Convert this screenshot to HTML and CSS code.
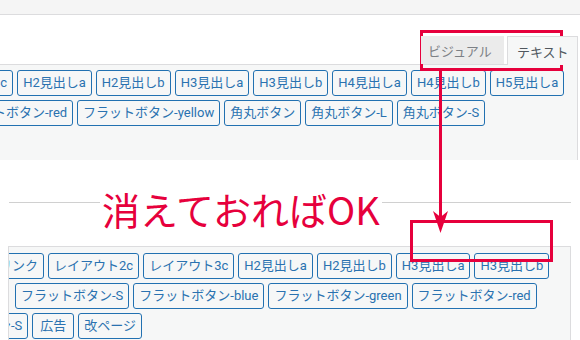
FILE: index.html
```html
<!DOCTYPE html>
<html lang="ja">
<head>
    <meta charset="UTF-8">
    <title>テキストタブ</title>
    <link rel="stylesheet" href="styles.css">
</head>
<body>
    <div class="page">
        <div class="shot-top">
            <div class="strip"></div>
            <div class="head">
                <div class="tabs">
                    <span class="tab tab-visual">ビジュアル</span>
                    <span class="tab tab-text">テキスト</span>
                </div>
            </div>
            <div class="toolbar toolbar-top">
                <div class="qt-row shift-top-1">
                    <button class="qt">レイアウト3c</button>
                    <button class="qt">H2見出しa</button>
                    <button class="qt">H2見出しb</button>
                    <button class="qt">H3見出しa</button>
                    <button class="qt">H3見出しb</button>
                    <button class="qt">H4見出しa</button>
                    <button class="qt">H4見出しb</button>
                    <button class="qt">H5見出しa</button>
                </div>
                <div class="qt-row shift-top-2">
                    <button class="qt">フラットボタン-red</button>
                    <button class="qt">フラットボタン-yellow</button>
                    <button class="qt">角丸ボタン</button>
                    <button class="qt">角丸ボタン-L</button>
                    <button class="qt">角丸ボタン-S</button>
                </div>
            </div>
        </div>

        <div class="shot-bottom">
            <div class="editor-line"></div>
            <div class="toolbar toolbar-bottom">
                <div class="qt-row shift-bottom-1">
                    <button class="qt">内部リンク</button>
                    <button class="qt">レイアウト2c</button>
                    <button class="qt">レイアウト3c</button>
                    <button class="qt">H2見出しa</button>
                    <button class="qt">H2見出しb</button>
                    <button class="qt">H3見出しa</button>
                    <button class="qt">H3見出しb</button>
                </div>
                <div class="qt-row shift-bottom-2">
                    <button class="qt">フラットボタン-S</button>
                    <button class="qt">フラットボタン-blue</button>
                    <button class="qt">フラットボタン-green</button>
                    <button class="qt">フラットボタン-red</button>
                </div>
                <div class="qt-row shift-bottom-3">
                    <button class="qt">角丸ボタン-S</button>
                    <button class="qt qt-short">広告</button>
                    <button class="qt">改ページ</button>
                </div>
            </div>
        </div>

        <!-- annotations -->
        <p class="note">消えておればOK</p>
        <div class="mark mark-tabs"></div>
        <div class="mark mark-empty"></div>
        <svg class="arrow" width="580" height="340" viewBox="0 0 580 340">
            <line x1="440.5" y1="70" x2="440.5" y2="222" stroke="#e6003c" stroke-width="3"/>
            <path d="M433 211 L440.5 233 L448 211 L440.5 217 Z" fill="#e6003c"/>
        </svg>
    </div>
</body>
</html>
```

FILE: styles.css
```css
body {
    margin: 0;
    background-color: #fff;
    font-family: "Noto Sans CJK JP", sans-serif;
}

.page {
    position: relative;
    width: 580px;
    height: 340px;
    overflow: hidden;
}

/* upper screenshot */
.strip {
    height: 14px;
    background-color: #f5f5f5;
    border-bottom: 1px solid #dcdcde;
}

.head {
    width: 578px;
    height: 49px;
    display: flex;
    justify-content: flex-end;
    align-items: flex-end;
}

.tabs {
    display: flex;
    align-items: flex-end;
    gap: 3px;
    position: relative;
    z-index: 1;
    margin-bottom: -1px;
}

.tab {
    box-sizing: border-box;
    font-size: 13px;
    line-height: 26px;
    padding-top: 2px;
}

.tab-visual {
    width: 83px;
    height: 28px;
    margin-bottom: 1px;
    padding-left: 7px;
    background-color: #ebebeb;
    color: #7c8085;
}

.tab-text {
    width: 71px;
    height: 29px;
    padding-left: 9px;
    background-color: #f6f7f7;
    border: 1px solid #dcdcde;
    border-bottom: none;
    color: #50575e;
}

.toolbar {
    box-sizing: border-box;
    display: flex;
    flex-direction: column;
    gap: 4px;
    background-color: #f6f7f7;
    border-top: 1px solid #dcdcde;
    border-right: 1px solid #dcdcde;
    overflow: hidden;
}

.toolbar-top {
    width: 578px;
    height: 96px;
    padding-top: 5px;
}

.qt-row {
    display: flex;
    gap: 4px;
}

.qt {
    flex: none;
    box-sizing: border-box;
    height: 26px;
    margin: 0;
    padding: 0 5px;
    border: 1px solid #2271b1;
    border-radius: 3px;
    background-color: #f6f7f7;
    color: #2a72b0;
    font-family: Roboto, "Noto Sans CJK JP", sans-serif;
    font-size: 13px;
    line-height: 24px;
    white-space: nowrap;
}

.qt-short {
    padding: 0 7px;
}

.shift-top-1 {
    margin-left: -78px;
}

.shift-top-2 {
    margin-left: -52px;
}

/* lower screenshot */
.shot-bottom {
    width: 563px;
    margin-left: 8px;
    padding-top: 42px;
}

.editor-line {
    margin-left: 1px;
    border-top: 1px solid #d0d0d0;
    height: 43px;
}

.toolbar-bottom {
    height: 100px;
    padding-top: 6px;
    border-left: 1px solid #dcdcde;
}

.shift-bottom-1 {
    margin-left: -42px;
}

.shift-bottom-2 {
    margin-left: 6px;
}

.shift-bottom-3 {
    margin-left: -69px;
}

/* red annotations */
.note {
    position: absolute;
    left: 100px;
    top: 190px;
    margin: 0;
    padding: 0 2px;
    background-color: #fff;
    color: #e6003c;
    font-size: 38px;
    line-height: 1;
}

.mark {
    position: absolute;
    box-sizing: border-box;
    border: 3px solid #e6003c;
}

.mark-tabs {
    left: 420px;
    top: 30px;
    width: 143px;
    height: 41px;
}

.mark-empty {
    left: 410px;
    top: 220px;
    width: 143px;
    height: 42px;
}

.arrow {
    position: absolute;
    left: 0;
    top: 0;
    pointer-events: none;
}
```
